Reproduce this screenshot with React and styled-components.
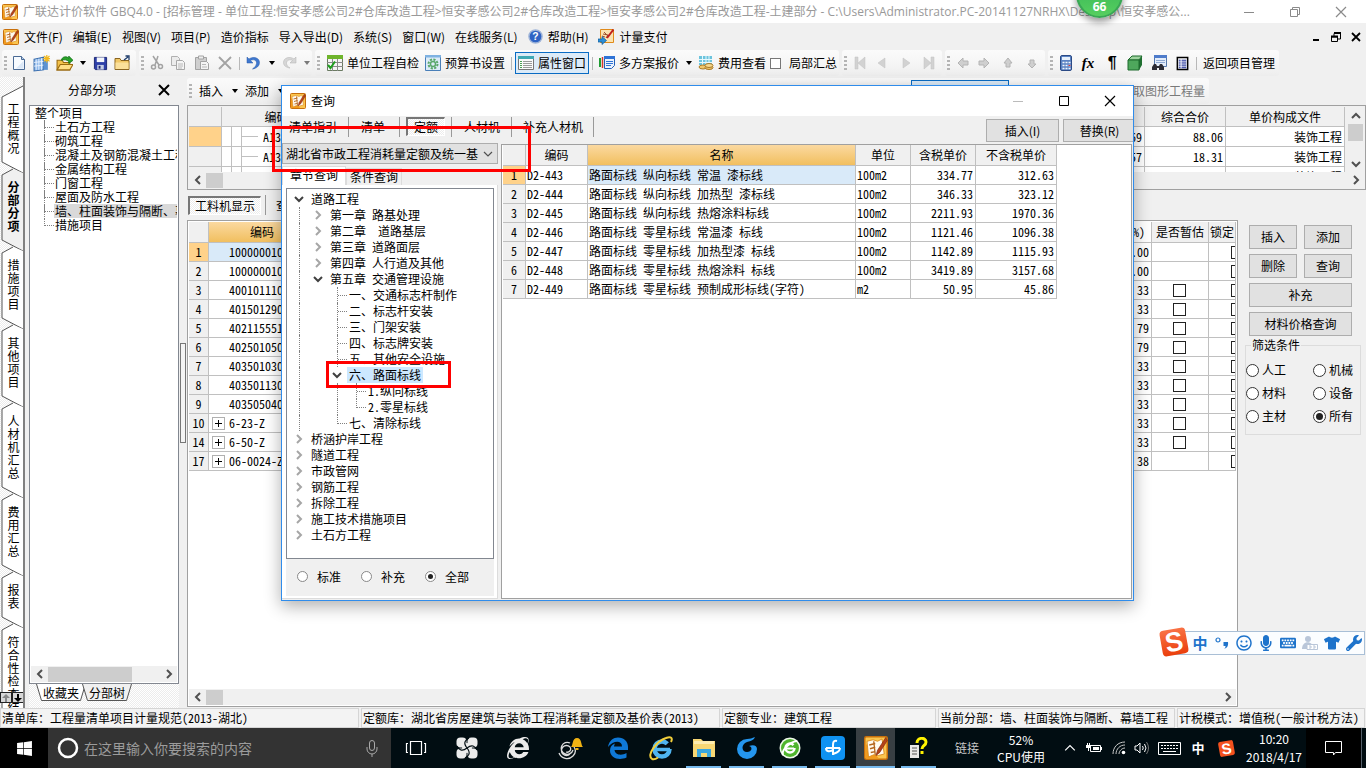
import React, { useState } from "react";
import styled, { createGlobalStyle, css } from "styled-components";
import {
  FaInternetExplorer,
  FaKeyboard,
  FaMicrophone,
  FaRegSmile,
  FaTshirt,
  FaWindows,
  FaWrench,
} from "react-icons/fa";

const uiFont = '"Noto Sans CJK SC", sans-serif';
const gridFont = '"Noto Sans Mono CJK SC", "Noto Sans CJK SC", sans-serif';

const hatch = css`
  background: repeating-conic-gradient(#ffffff 0 25%, #ececec 0 50%) 0 0 / 2px 2px;
`;

const GlobalStyle = createGlobalStyle`
  *, *::before, *::after { box-sizing: border-box; }
  body {
    margin: 0;
    background: #f0f0f0;
    color: #000;
    font: 12px/16px ${uiFont};
  }
  button, input, select { font: inherit; color: inherit; margin: 0; padding: 0; }
  button { background: none; border: 0; white-space: nowrap; }
  svg { display: block; flex: none; }
`;

/* ---------- icons ---------- */

const AppIcon = ({ size = 16 }) => (
  <svg width={size} height={size} viewBox="0 0 16 16">
    <rect x="0.5" y="0.5" width="15" height="15" rx="1" fill="#fbc54e" stroke="#c8700c" />
    <path d="M1 15V5l9 10z" fill="#f39a1c" />
    <path d="M2 3.500l4-1 3 1 3-1.500 1.500 10-4 1-3-.5L3 14z" fill="#fffaf0" stroke="#d98b20" strokeWidth="0.600" />
    <path d="M3.500 6l4-1M4 8.500l3.500-1M4.500 11l3-.6M6.500 3.500l1 9" stroke="#b5651d" strokeWidth="0.900" />
    <path d="M14.500 1L9 9.500 8 13l2.500-2L15.500 3z" fill="#b4431a" stroke="#7c2408" strokeWidth="0.400" />
  </svg>
);

const shapes = {
  newFile: (
    <>
      <path d="M2.500 1.500h8l3 3v10h-11z" fill="#f7fbff" stroke="#4a6a94" />
      <path d="M10.500 1.500v3h3" fill="#b9d0ec" stroke="#4a6a94" />
      <path d="M12.500 6v7.500H5z" fill="#dbe8f7" />
    </>
  ),
  newBook: (
    <>
      <path d="M1 4l9-2v12l-9 1z" fill="#8db8ea" stroke="#3c6fae" />
      <path d="M3 4v10M5.500 3.500V14M8 3v11M1 7l9-1M1 10.500l9-1" stroke="#eef6ff" strokeWidth="0.8" />
      <path d="M10 5h4v9h-4z" fill="#5d93d2" />
      <path d="M13 0v7M9.500 3.500h7M10.500 1l5 5M15.500 1l-5 5" stroke="#f2b91e" strokeWidth="1.200" />
    </>
  ),
  open: (
    <>
      <path d="M1 5h5l1 2h6v7H1z" fill="#f3c14a" stroke="#9a6b10" />
      <path d="M1 14l3-5h12l-3 5z" fill="#ffdf86" stroke="#9a6b10" />
      <path d="M5 5c1-4 5-4 7-2V1l4 4-4 3V6C10 4.500 8 4 5 5z" fill="#2aa52a" stroke="#0b6b12" strokeWidth="0.7" />
    </>
  ),
  save: (
    <>
      <path d="M1.500 1.500h13v13h-12l-1-1z" fill="#2d3fa8" stroke="#1a2470" />
      <path d="M4 1.500h8v5H4z" fill="#f4f6fb" />
      <path d="M4.500 9.500h7v5h-7z" fill="#c4cde4" />
      <path d="M6 10.500h2v3H6z" fill="#1a2470" />
    </>
  ),
  folder: (
    <>
      <path d="M1 3.500h5l1 2h8v9H1z" fill="#f1c766" stroke="#8a6521" />
      <path d="M1.500 7.500h13v6.500h-13z" fill="#fbe09a" />
      <path d="M10 5l4-3M11.500 1h3.500v4" stroke="#1f3d6b" strokeWidth="1.300" fill="none" />
    </>
  ),
  cut: (
    <>
      <path d="M4 1l6 9M9 1L6 10" stroke="#a3a3a3" strokeWidth="1.500" fill="none" />
      <circle cx="4.500" cy="12" r="2" fill="none" stroke="#a3a3a3" strokeWidth="1.500" />
      <circle cx="11.500" cy="11.500" r="2" fill="none" stroke="#a3a3a3" strokeWidth="1.500" />
    </>
  ),
  copy: (
    <>
      <path d="M1.500 1.500h6l2 2v7h-8z" fill="#ececec" stroke="#b0b0b0" />
      <path d="M6.500 5.500h6l2 2v7h-8z" fill="#f4f4f4" stroke="#a8a8a8" />
      <path d="M8 9h5M8 11h5M8 13h4" stroke="#b8b8b8" />
    </>
  ),
  paste: (
    <>
      <path d="M1.500 2.500h11v12h-11z" fill="#cfcfcf" stroke="#a3a3a3" />
      <path d="M4.500 1h5v3h-5z" fill="#eee" stroke="#a3a3a3" />
      <path d="M6.500 6.500h6l2 2v6h-8z" fill="#f4f4f4" stroke="#a3a3a3" />
      <path d="M8 9.500h4M8 12h5" stroke="#b8b8b8" />
    </>
  ),
  remove: <path d="M2 2l12 12M14 2L2 14" stroke="#a3a3a3" strokeWidth="1.800" />,
  undo: (
    <path d="M2 2v6h6L5.500 5.500C8 4 12 5 11.500 8.500 11 11 9.500 12.500 7.500 14c4-.5 7-3 7-6.500C14.500 2.500 8 1 4 4z" fill="#3f78cf" stroke="#2b5aa8" strokeWidth="0.500" />
  ),
  redo: (
    <path d="M14 2v6H8l2.500-2.500C8 4 4.500 5 4.500 8.500c.3 2 1.500 3.500 3.500 4.500-4-.5-6.500-2.500-6.500-5.500C1.500 2.500 8 1 12 4z" fill="#d6d6d6" stroke="#b0b0b0" strokeWidth="0.500" />
  ),
  check: (
    <>
      <path d="M.5.500h15v15H.5z" fill="#f5f5f5" stroke="#6b7b62" />
      <path d="M0 0h16v4H0z" fill="#6fb52c" />
      <path d="M0 7.500h16M0 11.500h16M5.500 4v12M10.500 4v12" stroke="#8a8a8a" />
      <path d="M1 10l2.500 3L8 6.500" stroke="#1e9e1e" strokeWidth="2" fill="none" />
    </>
  ),
  gear: (
    <>
      <path d="M.5.500h15v15H.5z" fill="#dcebf8" stroke="#4a7fb8" />
      <path d="M0 0h16v2.500H0z" fill="#7fb2e2" />
      <circle cx="8" cy="9" r="4.500" fill="none" stroke="#59a869" strokeWidth="2" strokeDasharray="2.200 1.300" />
      <circle cx="8" cy="9" r="2.500" fill="none" stroke="#59a869" strokeWidth="1.400" />
    </>
  ),
  list: (
    <>
      <path d="M.5 1.500h15v13H.5z" fill="#fafafa" stroke="#777" />
      <path d="M0 1h16v3H0z" fill="#3fa9b5" />
      <path d="M2 6.500h2M2 8.500h2M2 10.500h2M2 12.500h2" stroke="#49a04f" />
      <path d="M5 6.500h9M5 8.500h9M5 10.500h9M5 12.500h9" stroke="#9b9b9b" />
    </>
  ),
  plans: (
    <>
      <path d="M1 3v9" stroke="#1f9d33" strokeWidth="2" />
      <path d="M3.500 2v11" stroke="#d23a2e" strokeWidth="1.500" />
      <path d="M5.500 1.500h10v9l-3 3h-7z" fill="#eaf2fd" stroke="#2360b8" />
      <path d="M5 1h11v3H5z" fill="#2f73d6" />
      <path d="M7 6.500h7M7 8.500h7M7 10.500h5" stroke="#2f73d6" />
    </>
  ),
  fees: (
    <>
      <path d="M1 1h13v9H1z" fill="#6cc4dd" />
      <path d="M1 4.500h13M1 7.500h13M4.500 1v9M8 1v9M11 1v9" stroke="#e6f8fd" />
      <ellipse cx="5" cy="12" rx="4" ry="2" fill="#f1c76b" stroke="#a87a28" />
      <ellipse cx="11" cy="12.500" rx="4" ry="2" fill="#f1c76b" stroke="#a87a28" />
      <ellipse cx="11" cy="10.500" rx="4" ry="2" fill="#f7d88d" stroke="#a87a28" />
    </>
  ),
  first: <path d="M3 2h3v12H3zM13 2v12L6 8z" fill="#d2d2d2" stroke="#c0c0c0" strokeWidth="0.500" />,
  prev: <path d="M11 3v10L4 8z" fill="#d2d2d2" stroke="#c0c0c0" strokeWidth="0.500" />,
  next: <path d="M5 3v10l7-5z" fill="#d2d2d2" stroke="#c0c0c0" strokeWidth="0.500" />,
  last: <path d="M10 2h3v12h-3zM3 2v12l7-6z" fill="#d2d2d2" stroke="#c0c0c0" strokeWidth="0.500" />,
  left: <path d="M3 8l5-5v3h5v4H8v3z" fill="#cfcfcf" stroke="#b4b4b4" />,
  right: <path d="M13 8L8 3v3H3v4h5v3z" fill="#cfcfcf" stroke="#b4b4b4" />,
  up: <path d="M8 3l4 5h-2v4H6V8H4z" fill="#cfcfcf" stroke="#b4b4b4" />,
  down: <path d="M8 13l4-4h-2V5H6v4H4z" fill="#cfcfcf" stroke="#b4b4b4" />,
  calc: (
    <>
      <rect x="2.500" y="0.500" width="11" height="15" rx="1.500" fill="#5b83c4" stroke="#2b4a85" />
      <path d="M4 2h8v3H4z" fill="#e6f0fb" />
      <path d="M4.500 7.500h8M4.500 10.500h8M4.500 13.500h8" stroke="#f2f6fc" strokeWidth="1.600" strokeDasharray="2 1" />
      <path d="M10.500 10h2v1h-2z" fill="#d33" />
    </>
  ),
  cube: (
    <>
      <path d="M1 5l4-4h10l-3 4z" fill="#9fd39f" stroke="#1d6b2c" />
      <path d="M12 5l3-4v9l-3 5z" fill="#1f6f30" />
      <path d="M1 5h11v10H1z" fill="#4ea75c" stroke="#1d6b2c" />
    </>
  ),
  findDoc: (
    <>
      <path d="M3.500.500h12v11h-12z" fill="#e4edfa" stroke="#5577aa" />
      <path d="M3 0h13v3H3z" fill="#4f7ccb" />
      <path d="M5 5.500h9M5 7.500h9" stroke="#8fa9d2" />
      <path d="M1 15v-3l2-3h2l1 2h2l1-2h2l2 3v3H8v-2H6v2z" fill="#2c2c34" />
    </>
  ),
  sheet: (
    <>
      <path d="M2.500 1.500h11v13h-11z" fill="#fff" stroke="#000" strokeWidth="1.600" />
      <path d="M4 4.500h2M4 6.500h2M4 8.500h2M4 10.500h2M4 12.500h2M7 4.500h5M7 6.500h5M7 8.500h5M7 10.500h5M7 12.500h5" stroke="#0a1c8c" />
    </>
  ),
  help: (
    <>
      <circle cx="8" cy="8" r="7" fill="#2e63c4" stroke="#9fb4d8" strokeWidth="1.500" />
      <text x="8" y="12" textAnchor="middle" fontSize="11" fontWeight="700" fill="#fff" fontFamily="Liberation Sans">?</text>
    </>
  ),
  pay: (
    <>
      <path d="M2.500.500h13v13h-13z" fill="#fbe3b0" stroke="#e08a1a" />
      <path d="M5 5l5 1-2 3M6 3l4 4M4 7l3 1" stroke="#a0522d" fill="none" />
      <path d="M15.500.500L9 9" stroke="#c0201c" strokeWidth="2" />
      <path d="M0 10h4V7.500L8.500 11.500 4 15.500V13H0z" fill="#2c8ed6" stroke="#125b9a" strokeWidth="0.700" />
    </>
  ),
};

const Icon = ({ name, size = 16 }) => (
  <svg width={size} height={size} viewBox="0 0 16 16">{shapes[name]}</svg>
);

const Caret = () => (
  <svg width="7" height="4" viewBox="0 0 7 4"><path d="M1 0h6L4 4z" fill="currentColor" /></svg>
);

const chevrons = {
  left: "M7 1L3 5l4 4",
  right: "M3 1l4 4-4 4",
  up: "M1 7l4-4 4 4",
  down: "M1 3l4 4 4-4",
};

const Chevron = ({ dir, color = "#505050", weight = 2, size = 10 }) => (
  <svg width={size} height={size} viewBox="0 0 10 10">
    <path d={chevrons[dir]} fill="none" stroke={color} strokeWidth={weight} />
  </svg>
);

/* ---------- window frame ---------- */

const Desktop = styled.div`
  position: relative;
  display: flex;
  flex-direction: column;
  height: 100vh;
  min-height: 640px;
  overflow: hidden;
`;

const TitleBar = styled.header`
  display: flex;
  align-items: center;
  height: 23px;
  padding: 0 17px 0 2px;
  gap: 5px;
  background: #fff;
  color: #999;
`;

const Title = styled.h1`
  flex: 1;
  margin: 0;
  font: 12px/22px "Open Sans", ${uiFont};
  white-space: nowrap;
  overflow: hidden;
`;

const WindowButtons = styled.div`
  display: flex;
  align-items: center;
  gap: ${p => p.$gap}px;
  color: ${p => p.$color};
`;

const WindowButton = styled.button`
  display: grid;
  place-items: center;
  width: 16px;
  height: 16px;
`;

const MenuBar = styled.nav`
  display: flex;
  align-items: center;
  height: 27px;
  padding: 0 2px 0 3px;
  gap: 10px;
`;

const MenuItem = styled.button`
  display: flex;
  align-items: center;
  gap: 5px;
  line-height: 24px;
`;

const Spacer = styled.span`
  flex: 1;
`;

const ToolRow = styled.div`
  display: flex;
  height: 27px;
  padding-left: 2px;
  gap: 3px;
`;

const ToolGroup = styled.div`
  display: flex;
  align-items: center;
  height: 26px;
  padding: 0 1px 0 2px;
  border-radius: 3px;
  background: linear-gradient(#fbfbfb, #f4f4f4 60%, #ededed);
  flex: ${p => (p.$grow ? "1" : "none")};
`;

const Grip = styled.span`
  width: 3px;
  height: 15px;
  margin-right: 4px;
  background: repeating-linear-gradient(#b4b4b4 0 2px, transparent 2px 4px);
`;

const ToolButton = styled.button`
  display: flex;
  align-items: center;
  justify-content: center;
  gap: 4px;
  height: 22px;
  flex: none;
  width: ${p => (p.$w ? `${p.$w}px` : "auto")};
  padding: 0 ${p => (p.$w ? 0 : 2)}px;
  border: 1px solid ${p => (p.$active ? "#0a6cc4" : "transparent")};
  background: ${p => (p.$active ? "#dcebf8" : "none")};
  color: ${p => (p.$muted ? "#7a7a7a" : "#000")};
`;

const ToolSep = styled.span`
  width: 1px;
  height: 13px;
  margin: 0 3px;
  background: #b8b8b8;
`;

const ToolCheck = styled.label`
  display: flex;
  align-items: center;
  gap: 8px;
  margin-right: 1px;
`;

const Square = styled.input`
  appearance: none;
  display: block;
  flex: none;
  width: ${p => p.$size || 13}px;
  height: ${p => p.$size || 13}px;
  border: 1px solid ${p => p.$line || "#222"};
  background: #fff;
`;

const FxText = styled.em`
  font: italic 700 15px/16px "Liberation Serif", serif;
`;

const ParaText = styled.b`
  font: 700 16px/16px "Liberation Sans", sans-serif;
`;

/* ---------- workspace ---------- */

const Workspace = styled.main`
  display: flex;
  flex: 1;
  min-height: 0;
`;

const SideTabs = styled.nav`
  position: relative;
  display: flex;
  flex-direction: column;
  width: 25px;
  padding-top: 14px;
  overflow: hidden;
  border-right: 2px solid #808080;
  ${hatch}
`;

const SideTab = styled.button`
  position: relative;
  display: flex;
  align-items: flex-start;
  justify-content: center;
  flex: none;
  width: 23px;
  height: ${p => p.$h}px;
  padding: 11px 0 0 4px;
  font-weight: ${p => (p.$active ? 700 : 400)};

  svg {
    position: absolute;
    inset: 0;
    overflow: visible;
  }
  span {
    position: relative;
    line-height: 13px;
    white-space: pre-line;
    text-align: center;
  }
`;

const SideArrows = styled.div`
  position: absolute;
  left: 0;
  bottom: 5px;
  display: flex;

  button {
    display: grid;
    place-items: center;
    width: 12px;
    height: 11px;
    border: 1px solid #222;
    background: #d8d8d8;
  }
`;

const TreePanel = styled.aside`
  display: flex;
  flex-direction: column;
  width: 150px;
  margin: 0 1px 0 4px;
`;

const PanelHead = styled.div`
  display: flex;
  align-items: center;
  height: 28px;
  padding: 0 7px 2px 39px;
`;

const TreeBox = styled.div`
  display: flex;
  flex-direction: column;
  flex: 1;
  min-height: 0;
  padding: 0 1px 1px;
  border: 1px solid #828790;
  background: #fff;
`;

const TreeScroll = styled.div`
  flex: 1;
  overflow: hidden;
`;

const PartTree = styled.ul`
  margin: 0;
  padding: 0 0 0 4px;
  list-style: none;
  font-family: ${gridFont};

  ul {
    margin: 0 0 0 9px;
    padding: 0;
    list-style: none;
  }
`;

const PartRow = styled.li`
  display: flex;
  height: 14px;
  line-height: 14px;
  white-space: nowrap;

  &::before {
    content: "";
    flex: none;
    width: 10px;
    height: 8px;
    border-left: 1px dotted #808080;
    border-bottom: 1px dotted #808080;
  }
  &:not(:last-child) {
    background: repeating-linear-gradient(#808080 0 1px, transparent 1px 2px) 0 0 / 1px 14px no-repeat;
  }

  span {
    padding-left: 1px;
    background: ${p => (p.$selected ? "#d9d9d9" : "none")};
  }
`;

const PartRoot = styled.div`
  line-height: 14px;
`;

const BottomTabs = styled.div`
  display: flex;
  height: 24px;
  padding-left: 7px;
  ${hatch}
`;

const BottomTab = styled.button`
  position: relative;
  width: 50px;
  height: 17px;
  margin-right: -4px;
  line-height: 16px;
  font-family: ${gridFont};

  svg {
    position: absolute;
    inset: 0;
  }
  span {
    position: relative;
  }
`;

const Splitter = styled.div`
  display: flex;
  align-items: center;
  width: 7px;

  span {
    width: 6px;
    height: 100px;
    border: 1px solid #777;
    background: #f4f4f4;
  }
`;

const Content = styled.section`
  display: flex;
  flex-direction: column;
  flex: 1;
  min-width: 0;
`;

const SubTools = styled.div`
  display: flex;
  height: 28px;
  padding: 1px 157px 0 0;
`;

const HiddenTool = styled.span`
  flex: none;
  width: 98px;
  height: 22px;
  margin: 0 121px 0 auto;
  border: 1px solid #0a6cc4;
  background: #dcebf8;
`;

const Frame = styled.div`
  display: flex;
  flex-direction: column;
  flex: ${p => (p.$grow ? "1" : "none")};
  min-width: 0;
  height: ${p => (p.$h ? `${p.$h}px` : "auto")};
  padding: 1px;
  border: 1px solid #a0a0a0;
  background: ${p => p.$bg || "#fff"};
`;

const Clip = styled.div`
  flex: 1;
  min-width: 0;
  margin-right: ${p => p.$mr || 0}px;
  overflow: hidden;
  background: #fff;
`;

const FrameRow = styled.div`
  display: flex;
  flex: 1;
  min-height: 0;
`;

const Grid = styled.table`
  width: ${p => (p.$w ? `${p.$w}px` : "100%")};
  table-layout: fixed;
  border-collapse: separate;
  border-spacing: 0;
  font-family: ${gridFont};

  th,
  td {
    height: ${p => p.$row || 19}px;
    padding: 0 2px 0 1px;
    overflow: hidden;
    white-space: nowrap;
    line-height: 16px;
    border: solid #c0c0c0;
    border-width: 0 1px 1px 0;
    font-weight: 400;
    text-align: left;
  }
  thead th {
    height: ${p => p.$head || 21}px;
    padding: 0;
    text-align: center;
    background: #f0f0f0;
  }
  tbody th {
    padding: 0;
    text-align: center;
    background: #f0f0f0;
  }
`;

const HotTh = styled.th`
  && {
    background: linear-gradient(#fbd9a0, #f1bf5f);
  }
`;

const RowTh = styled.th`
  && {
    background: ${p => (p.$on ? "#ffd28a" : "#f0f0f0")};
  }
`;

const Cell = styled.td`
  && {
    text-align: ${p => p.$align || "left"};
    background: ${p => (p.$on ? "#d9eaf9" : "none")};
    padding-left: ${p => p.$pad || 1}px;
  }
  > input {
    margin: ${p => (p.$align === "center" ? "0 auto" : "0")};
  }
`;

const CodeCell = styled.div`
  display: flex;
  align-items: center;
  gap: 4px;
  padding-left: ${p => (p.$box ? 2 : 19)}px;
`;

const PlusBox = styled.button`
  display: grid;
  place-items: center;
  width: 13px;
  height: 13px;
  border: 1px solid #b0b0b0;
  background: #fff;
`;

const Branch = styled.div`
  display: flex;
  align-items: center;
  height: 19px;
  margin-left: -1px;

  i {
    width: 10px;
    height: 19px;
    border-right: 1px solid #c0c0c0;
  }
  b {
    width: 16px;
    height: 1px;
    margin-right: 5px;
    background: #c0c0c0;
  }
`;

const ScrollTrack = styled.div`
  display: flex;
  flex: none;
  flex-direction: ${p => (p.$vertical ? "column" : "row")};
  align-items: center;
  justify-content: space-between;
  ${p => (p.$vertical ? "width: 17px;" : "height: 16px;")}
  background: #f0f0f0;

  button {
    display: grid;
    place-items: center;
    width: 17px;
    height: 17px;
  }
  span {
    flex: none;
    background: #cdcdcd;
    ${p => (p.$vertical ? `width: 15px; height: ${p.$thumb}px;` : `height: 15px; width: ${p.$thumb}px;`)}
    ${p => (p.$vertical ? "margin-bottom: auto;" : "margin-right: auto;")}
  }
`;

const InfoTabs = styled.div`
  display: flex;
  align-items: center;
  height: 30px;
  padding-left: 1px;
  font-family: ${gridFont};
`;

const PressTab = styled.button`
  height: 19px;
  padding: 0 ${p => p.$pad || 11}px;
  line-height: 16px;
  font-family: ${gridFont};
  ${p =>
    p.$active &&
    css`
      border: 1px solid #fff;
      border-top: 2px solid #777;
      border-left: 2px solid #777;
      ${hatch}
    `}
`;

const TabSep = styled.span`
  width: 1px;
  height: 20px;
  margin: 0 ${p => p.$m || 5}px;
  background: #999;
`;

const LowerRow = styled.div`
  display: flex;
  flex: 1;
  min-height: 0;
  padding-bottom: 1px;
`;

const SideActions = styled.aside`
  width: 128px;
  padding: 5px 5px 0 7px;
  font-family: ${gridFont};
`;

const ActionGrid = styled.div`
  display: grid;
  grid-template-columns: 48px 48px;
  gap: 5px 7px;
  margin-left: 4px;
`;

const Button = styled.button`
  height: 24px;
  line-height: 20px;
  border: 1px solid #adadad;
  background: #e1e1e1;
  grid-column: ${p => (p.$wide ? "1 / -1" : "auto")};
`;

const FilterSet = styled.fieldset`
  display: grid;
  grid-template-columns: 67px 1fr;
  align-content: start;
  row-gap: 7px;
  height: 98px;
  margin: 1px 0 0;
  padding: 9px 0 0;
  border: 1px solid #dcdcdc;

  legend {
    margin-left: 5px;
    padding: 0 1px;
  }
`;

const RadioLabel = styled.label`
  display: flex;
  align-items: center;
  gap: ${p => p.$gap}px;
  height: 16px;
`;

const Radio = styled.input`
  appearance: none;
  display: grid;
  place-items: center;
  width: ${p => p.$size}px;
  height: ${p => p.$size}px;
  border: 1px solid ${p => p.$line};
  border-radius: 50%;
  background: #fff;

  &:checked::before {
    content: "";
    width: ${p => p.$size - 6}px;
    height: ${p => p.$size - 6}px;
    border-radius: 50%;
    background: #222;
  }
`;

/* ---------- query dialog ---------- */

const Dialog = styled.section`
  position: absolute;
  left: 281px;
  top: 85px;
  display: flex;
  flex-direction: column;
  width: 853px;
  height: 516px;
  border: 1px solid #2f8ceb;
  background: #f0f0f0;
  box-shadow: 0 5px 16px rgba(0, 0, 0, 0.32);
`;

const DialogTitle = styled.div`
  display: flex;
  align-items: center;
  gap: 5px;
  height: 30px;
  padding: 0 15px 0 8px;
  background: #fff;
`;

const DialogTools = styled.div`
  display: flex;
  flex: none;
  height: 27px;
  overflow: hidden;
`;

const DialogTabs = styled.div`
  display: flex;
  align-items: center;
  height: 21px;
`;

const DialogButtons = styled.div`
  display: flex;
  gap: 4px;
  margin: 3px -3px 0 auto;

  button {
    width: 73px;
    height: 23px;
  }
`;

const DialogBody = styled.div`
  display: flex;
  flex: 1;
  min-height: 0;
`;

const QueryPane = styled.div`
  display: flex;
  flex-direction: column;
  width: 216px;
  margin-right: 3px;
  font-family: ${gridFont};
`;

const Combo = styled.div`
  display: grid;
  grid-template-columns: 1fr 14px;
  align-items: center;
  height: 21px;
  border: 1px solid #adadad;
  background: #e1e1e1;

  select {
    grid-area: 1 / 1 / 2 / 3;
    appearance: none;
    width: 100%;
    height: 19px;
    padding-left: 3px;
    border: 0;
    background: none;
    font-family: ${gridFont};
  }
  svg {
    grid-area: 1 / 2;
    pointer-events: none;
  }
`;

const PageTabs = styled.div`
  display: flex;
  align-items: flex-end;
  height: 21px;
`;

const PageTab = styled.button`
  height: ${p => (p.$active ? 19 : 17)}px;
  padding: ${p => (p.$active ? "0 7px 4px" : "0 3px")};
  line-height: 16px;
  font-family: ${gridFont};
  border: 1px solid #dcdcdc;
  border-bottom: 0;
  background: ${p => (p.$active ? "#fff" : "#f0f0f0")};
`;

const Page = styled.div`
  display: flex;
  flex-direction: column;
  flex: 1;
  min-height: 0;
  margin-bottom: 1px;
  padding: 3px 3px 2px 4px;
  border: solid #dcdcdc;
  border-width: 0 1px 1px 0;
  background: #fff;
`;

const QuotaTree = styled.ul`
  flex: 1;
  margin: 0;
  padding: 2px 0 0 3px;
  overflow: hidden;
  list-style: none;
  border: 1px solid #828790;
  background: #fff;
`;

const QuotaRow = styled.li`
  display: flex;
  height: 16px;
  line-height: 16px;
  white-space: pre;

  > span:last-child {
    padding: 0 2px;
    background: ${p => (p.$selected ? "#cce8ff" : "none")};
  }
`;

const Guide = styled.span`
  display: flex;
  align-items: center;
  flex: none;
  width: 19px;
  height: 16px;
  padding-left: ${p => (p.$kind === "node" ? 4 : 9)}px;

  &::before {
    content: "";
    display: ${p => (p.$kind === "line" || p.$kind === "tee" || p.$kind === "elbow" ? "block" : "none")};
    align-self: flex-start;
    width: 10px;
    height: ${p => (p.$kind === "elbow" ? 9 : 16)}px;
    border-left: 1px dotted #808080;
    border-bottom: ${p => (p.$kind === "elbow" ? "1px dotted #808080" : "0")};
    background: ${p => (p.$kind === "tee" ? "repeating-linear-gradient(90deg, #808080 0 1px, transparent 1px 2px) 0 8px / 10px 1px no-repeat" : "none")};
  }
`;

const ScopeBar = styled.div`
  display: flex;
  align-items: center;
  gap: 20px;
  height: 37px;
  padding: 0 0 2px 11px;
  background: #f0f0f0;
`;

const ResultPane = styled.div`
  flex: 1;
  min-width: 0;
  margin: 1px 1px 1px 0;
  padding: 0 1px;
  border: 1px solid #a0a0a0;
  background: #fff;
`;

/* ---------- overlays ---------- */

const RedMark = styled.div`
  position: absolute;
  left: ${p => p.$x}px;
  top: ${p => p.$y}px;
  width: ${p => p.$w}px;
  height: ${p => p.$h}px;
  border: 3px solid #ff0000;
  pointer-events: none;
`;

const SpeedBall = styled.div`
  position: absolute;
  top: -29px;
  right: 243px;
  display: flex;
  align-items: flex-end;
  justify-content: center;
  width: 47px;
  height: 47px;
  padding-bottom: 1px;
  border: 2px solid #3aa655;
  border-radius: 50%;
  background: linear-gradient(#2fae55, #56cf5f);
  box-shadow: 0 4px 7px rgba(0, 0, 0, 0.4);
  color: #fff;
  font: 700 12px/16px "Open Sans", sans-serif;
`;

const ImeBar = styled.div`
  position: absolute;
  right: 1px;
  bottom: 113px;
  display: flex;
  align-items: center;
  gap: 6px;
  height: 24px;
  padding: 0 2px 0 19px;
  border: 1px solid #a9bfd6;
  background: #fbfdff;
  color: #1e73cb;

  > span,
  > svg {
    width: 16px;
    height: 16px;
  }
`;

const ImeLogo = styled.b`
  position: absolute;
  left: -12px;
  top: -3px;
  display: grid;
  place-items: center;
  width: 26px;
  height: 26px;
  border-radius: 4px;
  background: linear-gradient(#f97245, #ea3f0c);
  color: #fff;
  font: 700 27px/26px "Liberation Sans", sans-serif;
  transform: rotate(-10deg);
`;

const ImeText = styled.span`
  font: 700 ${p => p.$size || 15}px/16px ${uiFont};
  text-align: center;
`;

/* ---------- status bar and taskbar ---------- */

const StatusBar = styled.footer`
  display: grid;
  grid-template-columns: 359fr 359fr 214fr 237fr 188fr;
  gap: 2px;
  flex: none;
  height: 20px;
  padding: 0 1px 0 0;
  font-family: ${gridFont};

  span {
    padding-left: 1px;
    border: 1px solid #d5d5d5;
    line-height: 18px;
    white-space: nowrap;
    overflow: hidden;
    background: #f3f3f3;
  }
`;

const Taskbar = styled.footer`
  display: flex;
  flex: none;
  height: 40px;
  background: #010d12;
  color: #fff;
`;

const StartButton = styled.button`
  display: grid;
  place-items: center;
  width: 48px;
  background: #000;
`;

const SearchBox = styled.label`
  display: flex;
  align-items: center;
  width: 343px;
  padding: 0 12px 0 9px;
  gap: 5px;
  background: #333;

  input {
    flex: 1;
    min-width: 0;
    border: 0;
    outline: 0;
    background: none;
    font: 14px/20px ${uiFont};
  }
  input::placeholder {
    color: #9b9b9b;
    opacity: 1;
  }
`;

const TaskButton = styled.button`
  display: grid;
  place-items: center;
  width: ${p => p.$w}px;
  padding: 0 0 1px;
  background: ${p => (p.$active ? "#383f43" : "none")};
  box-shadow: ${p => (p.$running ? "inset 0 -2px #76b9ed" : "none")};
  ${p => (p.$running ? "width: 35px; margin: 0 4px;" : "")}
  ${p => (p.$active ? "width: 39px; margin: 0 2px;" : "")}
`;

const Tray = styled.div`
  display: flex;
  align-items: center;
  margin-left: auto;
`;

const TrayItem = styled.button`
  display: grid;
  place-items: center;
  width: ${p => p.$w}px;
  line-height: ${p => p.$line || 16}px;
  text-align: center;
  color: ${p => p.$color || "#fff"};
`;

const TrayLogo = styled.b`
  display: grid;
  place-items: center;
  width: 15px;
  height: 15px;
  border-radius: 2px;
  background: #f4511e;
  font: 700 15px/15px "Liberation Sans", sans-serif;
  transform: rotate(-10deg);
`;

const Notice = styled.button`
  display: grid;
  place-items: center;
  width: 56px;
  height: 40px;
  margin-right: 4px;
  border-right: 1px solid #55606a;
  background: #000;
`;

/* ---------- data ---------- */

const menus = ["编辑(E)", "视图(V)", "项目(P)", "造价指标", "导入导出(D)", "系统(S)", "窗口(W)", "在线服务(L)"];

const sideTabs = ["工程概况", "分部分项", "措施项目", "其他项目", "人材机汇总", "费用汇总", "报表", "符合性检查结"];

const parts = ["土石方工程", "砌筑工程", "混凝土及钢筋混凝土工程", "金属结构工程", "门窗工程", "屋面及防水工程", "墙、柱面装饰与隔断、幕墙工程", "措施项目"];

const resources = [
  ["1", "100000010", ".00"],
  ["2", "100000010", ".00"],
  ["3", "400101110", "33", true],
  ["4", "401501290", "33", true],
  ["5", "402115551", "79", true],
  ["6", "402501050", "79", true],
  ["7", "403501030", "33", true],
  ["8", "403501130", "33", true],
  ["9", "403505040", "33", true],
  ["10", "6-23-Z", "33", true],
  ["14", "6-50-Z", "33", true],
  ["17", "06-0024-Z", "38"],
];

const quotas = [
  ["D2-443", "路面标线 纵向标线 常温 漆标线", "100m2", "334.77", "312.63"],
  ["D2-444", "路面标线 纵向标线 加热型 漆标线", "100m2", "346.33", "323.12"],
  ["D2-445", "路面标线 纵向标线 热熔涂料标线", "100m2", "2211.93", "1970.36"],
  ["D2-446", "路面标线 零星标线 常温漆 标线", "100m2", "1121.46", "1096.38"],
  ["D2-447", "路面标线 零星标线 加热型漆 标线", "100m2", "1142.89", "1115.93"],
  ["D2-448", "路面标线 零星标线 热熔涂料 标线", "100m2", "3419.89", "3157.68"],
  ["D2-449", "路面标线 零星标线 预制成形标线(字符)", "m2", "50.95", "45.86"],
];

// guide cells before each label: o open, c closed, l line, t tee, e elbow, _ blank
const quotaTree = [
  ["o", "道路工程"],
  ["lc", "第一章 路基处理"],
  ["lc", "第二章  道路基层"],
  ["lc", "第三章 道路面层"],
  ["lc", "第四章 人行道及其他"],
  ["lo", "第五章 交通管理设施"],
  ["l_t", "一、交通标志杆制作"],
  ["l_t", "二、标志杆安装"],
  ["l_t", "三、门架安装"],
  ["l_t", "四、标志牌安装"],
  ["l_t", "五、其他安全设施"],
  ["l_o", "六、路面标线"],
  ["l_lt", "1.纵向标线"],
  ["l_le", "2.零星标线"],
  ["l_e", "七、清除标线"],
  ["c", "桥涵护岸工程"],
  ["c", "隧道工程"],
  ["c", "市政管网"],
  ["c", "钢筋工程"],
  ["c", "拆除工程"],
  ["c", "施工技术措施项目"],
  ["c", "土石方工程"],
];

const guideKinds = { l: "line", t: "tee", e: "elbow", o: "node", c: "node", _: "blank" };

/* ---------- pieces ---------- */

const HScroll = ({ thumb }) => (
  <ScrollTrack $thumb={thumb}>
    <button aria-label="向左"><Chevron dir="left" /></button>
    <span />
    <button aria-label="向右"><Chevron dir="right" /></button>
  </ScrollTrack>
);

const WinControls = ({ gap, color, dim }) => (
  <WindowButtons $gap={gap} $color={color}>
    <WindowButton aria-label="最小化">
      <svg width="12" height="12"><path d="M1 6.500h10" stroke={dim || "currentColor"} /></svg>
    </WindowButton>
    <WindowButton aria-label="最大化">
      {dim ? (
        <svg width="12" height="12"><path d="M1.500 1.500h9v9h-9z" fill="none" stroke="currentColor" /></svg>
      ) : (
        <svg width="12" height="12"><path d="M1.500 3.500h7v7h-7zM3.500 3.500v-2h7v7h-2" fill="none" stroke="currentColor" /></svg>
      )}
    </WindowButton>
    <WindowButton aria-label="关闭">
      <svg width="12" height="12"><path d="M1 1l10 10M11 1L1 11" stroke="currentColor" strokeWidth="1.200" /></svg>
    </WindowButton>
  </WindowButtons>
);

const MainTools = () => (
  <ToolRow>
    <ToolGroup>
      <Grip />
      <ToolButton $w={16} aria-label="新建"><Icon name="newFile" /></ToolButton>
      <ToolButton $w={28} aria-label="新建项目"><Icon name="newBook" size={17} /></ToolButton>
      <ToolButton $w={18} aria-label="打开"><Icon name="open" size={17} /></ToolButton>
      <ToolButton $w={18} aria-label="打开列表"><Caret /></ToolButton>
      <ToolButton $w={18} aria-label="保存"><Icon name="save" size={15} /></ToolButton>
      <ToolButton $w={26} aria-label="目录"><Icon name="folder" /></ToolButton>
    </ToolGroup>
    <ToolGroup>
      <Grip />
      <ToolButton $w={18} aria-label="剪切"><Icon name="cut" /></ToolButton>
      <ToolButton $w={24} aria-label="复制"><Icon name="copy" /></ToolButton>
      <ToolButton $w={24} aria-label="粘贴"><Icon name="paste" /></ToolButton>
      <ToolButton $w={22} aria-label="删除"><Icon name="remove" /></ToolButton>
      <ToolSep />
      <ToolButton $w={20} aria-label="撤销"><Icon name="undo" /></ToolButton>
      <ToolButton $w={16} aria-label="撤销列表"><Caret /></ToolButton>
      <ToolButton $w={22} aria-label="恢复"><Icon name="redo" /></ToolButton>
      <ToolButton $w={10} $muted aria-label="恢复列表"><Caret /></ToolButton>
    </ToolGroup>
    <ToolGroup>
      <Grip />
      <ToolButton><Icon name="check" />单位工程自检</ToolButton>
      <ToolButton><Icon name="gear" />预算书设置</ToolButton>
      <ToolSep />
      <ToolButton $active><Icon name="list" />属性窗口</ToolButton>
      <ToolSep />
      <ToolButton><Icon name="plans" />多方案报价</ToolButton>
      <ToolButton $w={12} aria-label="方案列表"><Caret /></ToolButton>
      <ToolButton $w={76}><Icon name="fees" />费用查看</ToolButton>
      <ToolCheck><Square type="checkbox" $size={11} $line="#777" />局部汇总</ToolCheck>
    </ToolGroup>
    <ToolGroup>
      <Grip />
      <ToolButton $w={18} aria-label="首条"><Icon name="first" /></ToolButton>
      <ToolButton $w={26} aria-label="上一条"><Icon name="prev" /></ToolButton>
      <ToolButton $w={22} aria-label="下一条"><Icon name="next" /></ToolButton>
      <ToolButton $w={24} aria-label="末条"><Icon name="last" /></ToolButton>
    </ToolGroup>
    <ToolGroup>
      <Grip />
      <ToolButton $w={18} aria-label="升级"><Icon name="left" /></ToolButton>
      <ToolButton $w={24} aria-label="降级"><Icon name="right" /></ToolButton>
      <ToolButton $w={24} aria-label="上移"><Icon name="up" /></ToolButton>
      <ToolButton $w={24} aria-label="下移"><Icon name="down" /></ToolButton>
    </ToolGroup>
    <ToolGroup>
      <Grip />
      <ToolButton $w={18} aria-label="计算器"><Icon name="calc" /></ToolButton>
      <ToolButton $w={26} aria-label="公式"><FxText>fx</FxText></ToolButton>
      <ToolButton $w={22} aria-label="段落"><ParaText>¶</ParaText></ToolButton>
      <ToolButton $w={24} aria-label="图元"><Icon name="cube" /></ToolButton>
      <ToolButton $w={24} aria-label="查找"><Icon name="findDoc" /></ToolButton>
      <ToolButton $w={22} aria-label="表格"><Icon name="sheet" size={15} /></ToolButton>
      <ToolSep />
      <ToolButton>返回项目管理</ToolButton>
    </ToolGroup>
  </ToolRow>
);

const VerticalTabs = ({ active, onSelect }) => (
  <SideTabs>
    {sideTabs.map((name, i) => {
      const h = name.length * 13 + 26;
      const top = i === 0 ? "M23 -5L2 6" : "M13 0L2 6";
      return (
        <SideTab key={name} $h={h} $active={active === i} onClick={() => onSelect(i)}>
          <svg width="23" height={h}>
            <path d={`M23 ${i === 0 ? -5 : 4}L13 0L2 6V${h - 7}L23 ${h + 4}z`} fill={active === i ? "#f0f0f0" : "#fff"} />
            <path d={`${top}V${h - 7}L23 ${h + 4}`} fill="none" stroke="#555" />
          </svg>
          <span>{name.split("").join("\n")}</span>
        </SideTab>
      );
    })}
    <SideArrows>
      <button aria-label="上翻"><svg width="8" height="8"><path d="M4 0l4 4H5v4H3V4H0z" fill="#888" /></svg></button>
      <button aria-label="下翻"><svg width="8" height="8"><path d="M4 8l4-4H5V0H3v4H0z" fill="#000" /></svg></button>
    </SideArrows>
  </SideTabs>
);

const PartPanel = () => (
  <TreePanel>
    <PanelHead>
      分部分项
      <Spacer />
      <WindowButton aria-label="关闭面板">
        <svg width="12" height="12"><path d="M1 1l10 10M11 1L1 11" stroke="#000" strokeWidth="2" /></svg>
      </WindowButton>
    </PanelHead>
    <TreeBox>
      <TreeScroll>
        <PartTree>
          <li>
            <PartRoot>整个项目</PartRoot>
            <ul>
              {parts.map((p, i) => (
                <PartRow key={p} $selected={i === 6}><span>{p}</span></PartRow>
              ))}
            </ul>
          </li>
        </PartTree>
      </TreeScroll>
      <HScroll thumb={84} />
    </TreeBox>
    <BottomTabs>
      {["收藏夹", "分部树"].map((name, i) => (
        <BottomTab key={name}>
          <svg width="50" height="17"><path d="M.5 0l5 16.500h39L49.500 0" fill={i ? "#f0f0f0" : "#fff"} stroke="#555" /></svg>
          <span>{name}</span>
        </BottomTab>
      ))}
    </BottomTabs>
  </TreePanel>
);

const BillGrid = () => (
  <Frame $h={85} $bg="#f0f0f0">
    <FrameRow>
      <Clip $mr={2}>
        <Grid $row={20} $head={20}>
          <colgroup>
            <col style={{ width: 33 }} /><col style={{ width: 110 }} /><col /><col style={{ width: 81 }} /><col style={{ width: 119 }} />
          </colgroup>
          <thead><tr><th /><th>编码</th><th /><th>综合合价</th><th>单价构成文件</th></tr></thead>
          <tbody>
            {[["69", "88.06"], ["57", "18.31"], ["", ""]].map((r, i) => (
              <tr key={i}>
                <RowTh $on={i === 0} />
                <td><Branch><i /><i />{r[0] && <><b />A13</>}</Branch></td>
                <Cell $align="right">{r[0]}</Cell>
                <Cell $align="right">{r[1]}</Cell>
                <Cell $align="right">装饰工程</Cell>
              </tr>
            ))}
          </tbody>
        </Grid>
      </Clip>
      <ScrollTrack $vertical $thumb={17}>
        <button aria-label="向上"><Chevron dir="up" /></button>
        <span />
        <button aria-label="向下"><Chevron dir="down" /></button>
      </ScrollTrack>
    </FrameRow>
    <HScroll thumb={17} />
  </Frame>
);

const ResourceGrid = () => (
  <Frame $grow>
    <Clip>
      <Grid>
        <colgroup>
          <col style={{ width: 20 }} /><col style={{ width: 107 }} /><col /><col style={{ width: 57 }} /><col style={{ width: 27 }} />
        </colgroup>
        <thead><tr><th /><HotTh>编码</HotTh><Cell as="th" $align="right">%)&nbsp;</Cell><th>是否暂估</th><th>锁定</th></tr></thead>
        <tbody>
          {resources.map(([no, code, rate, estimate], i) => (
            <tr key={no}>
              <RowTh $on={i === 0}>{no}</RowTh>
              <Cell $on={i === 0}>
                <CodeCell $box={i > 8}>
                  {i > 8 && <PlusBox aria-label="展开"><svg width="7" height="7"><path d="M0 3.500h7M3.500 0v7" stroke="#000" /></svg></PlusBox>}
                  {code}
                </CodeCell>
              </Cell>
              <Cell $align="right">{rate}</Cell>
              <Cell $align="center">{estimate && <Square type="checkbox" aria-label={`暂估 ${no}`} />}</Cell>
              <Cell $pad={22}><Square type="checkbox" aria-label={`锁定 ${no}`} /></Cell>
            </tr>
          ))}
        </tbody>
      </Grid>
    </Clip>
    <HScroll thumb={17} />
  </Frame>
);

const Actions = () => {
  const [filter, setFilter] = useState("所有");
  return (
    <SideActions>
      <ActionGrid>
        <Button>插入</Button>
        <Button>添加</Button>
        <Button>删除</Button>
        <Button>查询</Button>
        <Button $wide>补充</Button>
        <Button $wide>材料价格查询</Button>
      </ActionGrid>
      <FilterSet>
        <legend>筛选条件</legend>
        {["人工", "机械", "材料", "设备", "主材", "所有"].map(f => (
          <RadioLabel key={f} $gap={3}>
            <Radio type="radio" name="filter" $size={13} $line="#333" checked={filter === f} onChange={() => setFilter(f)} />
            {f}
          </RadioLabel>
        ))}
      </FilterSet>
    </SideActions>
  );
};

const QueryDialog = () => {
  const [scope, setScope] = useState("全部");
  return (
    <Dialog>
      <DialogTitle>
        <AppIcon />
        查询
        <Spacer />
        <WinControls gap={30} color="#000" dim="#bbb" />
      </DialogTitle>
      <DialogTools>
        <DialogTabs>
          <PressTab $pad={7}>清单指引</PressTab>
          <TabSep $m={4} />
          <PressTab $pad={8}>清单</PressTab>
          <TabSep $m={6} />
          <PressTab $active $pad={6}>定额</PressTab>
          <TabSep $m={6} />
          <PressTab $pad={6}>人材机</PressTab>
          <TabSep $m={5} />
          <PressTab $pad={6}>补充人材机</PressTab>
          <TabSep $m={4} />
        </DialogTabs>
        <DialogButtons>
          <Button>插入(I)</Button>
          <Button>替换(R)</Button>
        </DialogButtons>
      </DialogTools>
      <DialogBody>
        <QueryPane>
          <Combo>
            <select aria-label="定额库" defaultValue="hb">
              <option value="hb">湖北省市政工程消耗量定额及统一基</option>
            </select>
            <Chevron dir="down" weight={1.2} />
          </Combo>
          <PageTabs>
            <PageTab $active>章节查询</PageTab>
            <PageTab>条件查询</PageTab>
          </PageTabs>
          <Page>
            <QuotaTree>
              {quotaTree.map(([guides, label]) => (
                <QuotaRow key={label + guides} $selected={label === "六、路面标线"}>
                  {guides.split("").map((g, i) => (
                    <Guide key={i} $kind={guideKinds[g]}>
                      {g === "o" && <Chevron dir="down" color="#404040" />}
                      {g === "c" && <Chevron dir="right" color="#a6a6a6" />}
                    </Guide>
                  ))}
                  <span>{label}</span>
                </QuotaRow>
              ))}
            </QuotaTree>
            <ScopeBar>
              {["标准", "补充", "全部"].map(s => (
                <RadioLabel key={s} $gap={9}>
                  <Radio type="radio" name="scope" $size={11} $line="#888" checked={scope === s} onChange={() => setScope(s)} />
                  {s}
                </RadioLabel>
              ))}
            </ScopeBar>
          </Page>
        </QueryPane>
        <ResultPane>
          <Grid $w={554}>
            <colgroup>
              <col style={{ width: 23 }} /><col style={{ width: 62 }} /><col style={{ width: 268 }} />
              <col style={{ width: 55 }} /><col style={{ width: 65 }} /><col style={{ width: 81 }} />
            </colgroup>
            <thead><tr><th /><th>编码</th><HotTh>名称</HotTh><th>单位</th><th>含税单价</th><th>不含税单价</th></tr></thead>
            <tbody>
              {quotas.map(([code, name, unit, taxed, net], i) => (
                <tr key={code}>
                  <RowTh $on={i === 0}>{i + 1}</RowTh>
                  <td>{code}</td>
                  <Cell $on={i === 0}>{name}</Cell>
                  <td>{unit}</td>
                  <Cell $align="right">{taxed}</Cell>
                  <Cell $align="right">{net}</Cell>
                </tr>
              ))}
            </tbody>
          </Grid>
        </ResultPane>
      </DialogBody>
    </Dialog>
  );
};

const Ime = () => (
  <ImeBar>
    <ImeLogo>S</ImeLogo>
    <ImeText>中</ImeText>
    <svg viewBox="0 0 16 16">
      <circle cx="4" cy="5" r="2" fill="none" stroke="#1e73cb" strokeWidth="1.200" />
      <path d="M9.500 7h4.500c.5 4-1 6-4 7 1.300-1.200 1.600-2 1.500-3h-2z" fill="#1e73cb" />
    </svg>
    <FaRegSmile />
    <FaMicrophone />
    <FaKeyboard />
    <svg viewBox="0 0 16 16">
      <circle cx="6" cy="4" r="3" fill="#b9c6d9" />
      <path d="M0 14c0-9 11-9 12 0z" fill="#b9c6d9" />
      <path d="M5 9.500h10.500v5H5z" fill="#fff" stroke="#b9c6d9" />
      <path d="M7 11h2v2H7M11 11h2v2h-2" fill="none" stroke="#b9c6d9" />
    </svg>
    <FaTshirt />
    <FaWrench />
  </ImeBar>
);

const taskApps = [
  { id: "任务视图", w: 50, art: <svg width="22" height="16" viewBox="0 0 22 16"><path d="M5.500 1.500h11v13h-11zM3 3.500H1.500v9H3M19 3.500h1.500v9H19" fill="none" stroke="#fff" strokeWidth="1.200" /></svg> },
  {
    id: "花瓣", w: 51, art: (
      <svg width="22" height="22" viewBox="0 0 22 22">
        <g fill="#ececec">
          <rect x="0.500" y="0.500" width="10" height="10" rx="4" />
          <rect x="11.500" y="0.500" width="10" height="10" rx="4" />
          <rect x="0.500" y="11.500" width="10" height="10" rx="4" />
          <rect x="11.500" y="11.500" width="10" height="10" rx="4" />
          <circle cx="11" cy="11" r="5" />
        </g>
        <path d="M11 11C7 6 9 3 13 1M11 11c5-4 8-2 10 2M11 11c4 5 2 8-2 10M11 11c-5 4-8 2-10-2" fill="none" stroke="#010d12" strokeWidth="1.200" />
      </svg>
    ),
  },
  { id: "浏览器", w: 51, art: <FaInternetExplorer size={22} color="#ececec" /> },
  {
    id: "提醒", w: 53, art: (
      <svg width="28" height="24" viewBox="0 0 28 24">
        <path d="M17 14a6 6 0 1 1-3-7M14 18a5 5 0 1 1 0-7c2 3-1 6-4 5M3 17a8.500 8.500 0 0 0 14 3c3-3 3-6 1-9" fill="none" stroke="#ddd" strokeWidth="1.300" />
        <path d="M15 11c2-1 1-9 6-9s4 8 6 9zM19.500 12h3v2h-3z" fill="#f0b213" />
      </svg>
    ),
  },
  {
    id: "Edge", w: 43, art: (
      <svg width="22" height="22" viewBox="0 0 22 22">
        <path d="M1 10C2 3.500 6.500.500 11 .500c6 0 10 4 10 9.500v3H7.500c.5 5 7 6 12 3v4.500C12 24 3 21 3 13.500 3 10 5 7.500 8 6.500 7.500 7.500 7 8.500 7 9.500h8C15 3 6 3.500 1 10z" fill="#0f78d6" />
      </svg>
    ),
  },
  {
    id: "IE", w: 43, art: (
      <svg width="26" height="26" viewBox="0 0 26 26">
        <circle cx="14" cy="14" r="7.500" fill="none" stroke="#4fb4ef" strokeWidth="4.500" strokeDasharray="41 6.100" />
        <path d="M8 14.500h14" stroke="#4fb4ef" strokeWidth="3.500" />
        <path d="M4 24C-2 20 9 6 18 3c5-2 7 0 5 4M4 24c2 1 4 0 6-1.500" fill="none" stroke="#f2cf3b" strokeWidth="2" />
      </svg>
    ),
  },
  { id: "资源管理器", w: 43, running: true, art: <svg width="22" height="20" viewBox="0 0 22 20"><path d="M0 1h8l2 2h12v16H0z" fill="#f7d774" /><path d="M1 3h20v3H1z" fill="#fdecb0" /><path d="M4 19v-8h14v8h-4v-4H8v4z" fill="#3aa7e0" /></svg> },
  { id: "广联达", w: 43, running: true, art: <svg width="24" height="24" viewBox="0 0 24 24"><path d="M20 1c-3 1-5 2-8 2a10 10 0 1 0 10 10c0-3-3-5-8-3 4 1 3 6-2 6-6 0-6-8 0-10 4-1 7-2 8-5z" fill="#2496ee" /></svg> },
  { id: "安全浏览器", w: 43, running: true, art: <svg width="22" height="22" viewBox="0 0 22 22"><circle cx="11" cy="11" r="10.500" fill="#eef8ea" /><circle cx="11" cy="11" r="9" fill="#4fb52d" /><circle cx="11" cy="11" r="4.500" fill="none" stroke="#fff" strokeWidth="2.500" strokeDasharray="24.500 3.800" /><path d="M7 11.500h8M4 18C2 14 10 5 18 4" fill="none" stroke="#fff" strokeWidth="2" /></svg> },
  { id: "加密锁", w: 43, running: true, art: <svg width="24" height="24" viewBox="0 0 24 24"><rect width="24" height="24" rx="4" fill="#0f92f2" /><path d="M16 5c-4-1-4 2-4 5v9M5 12h14M5 12c0 4 4 4 7 2M19 12c0 4-4 5-7 6" fill="none" stroke="#fff" strokeWidth="2" /></svg> },
  { id: "计价软件", w: 43, running: true, active: true, art: <AppIcon size={24} /> },
  { id: "帮助", w: 43, running: true, art: <svg width="20" height="22" viewBox="0 0 20 22"><path d="M1 8h9v13H1z" fill="#e8e8e8" /><path d="M3 11h5M3 14h5M3 17h5" stroke="#555" /><path d="M8 6c0-6 9-6 9-1 0 4-4 3-4 7M13 14v3" fill="none" stroke="#fff200" strokeWidth="3" /></svg> },
];

const SystemTaskbar = () => (
  <Taskbar>
    <StartButton aria-label="开始"><FaWindows size={17} /></StartButton>
    <SearchBox>
      <svg width="22" height="22"><circle cx="11" cy="11" r="9" fill="none" stroke="#fff" strokeWidth="2.500" /></svg>
      <input placeholder="在这里输入你要搜索的内容" aria-label="搜索" />
      <svg width="14" height="18" viewBox="0 0 14 18"><path d="M4.500 4a2.500 2.500 0 0 1 5 0v5a2.500 2.500 0 0 1-5 0zM2 8v2a5 5 0 0 0 10 0V8M7 15v3" fill="none" stroke="#aaa" /></svg>
    </SearchBox>
    {taskApps.map(app => (
      <TaskButton key={app.id} aria-label={app.id} $w={app.w} $running={app.running} $active={app.active}>{app.art}</TaskButton>
    ))}
    <Tray>
      <TrayItem $w={34} $color="#c8c8c8">链接</TrayItem>
      <TrayItem $w={74} $line={17}><span>52%<br />CPU使用</span></TrayItem>
      <TrayItem $w={24}><Chevron dir="up" color="#fff" weight={1} size={12} /></TrayItem>
      <TrayItem $w={24}><svg width="16" height="12"><path d="M4.500 3.500h10v6h-10z" fill="none" stroke="#fff" /><path d="M7 5h6v3H7zM15 5h1v3h-1zM0 3h5v3H3v3H2V6H0zM1 1h1v2H1zM3 1h1v2H3z" fill="#fff" /></svg></TrayItem>
      <TrayItem $w={26}><svg width="14" height="14"><path d="M1 13C1 6 6 1 13 1M4 13c0-5 4-9 9-9M7 13c0-3 3-6 6-6" fill="none" stroke="#c8c8c8" /><circle cx="11.500" cy="11.500" r="1.800" fill="#fff" /></svg></TrayItem>
      <TrayItem $w={20}><svg width="16" height="14"><path d="M1 5h2l3-3v10L3 9H1z" fill="none" stroke="#fff" /><path d="M8.500 5q1.500 2 0 4M10.500 3q3 4 0 8" fill="none" stroke="#fff" /><path d="M12.500 1q4 6 0 12" fill="none" stroke="#777" /></svg></TrayItem>
      <TrayItem $w={34}><svg width="23" height="13"><path d="M.5.500h22v12H.5z" fill="none" stroke="#fff" /><path d="M3 3.500h17M3 6.500h17" stroke="#fff" strokeDasharray="2 1" /><path d="M5 9.500h13" stroke="#fff" /></svg></TrayItem>
      <TrayItem $w={24}><ImeText $size={13}>中</ImeText></TrayItem>
      <TrayItem $w={32}><TrayLogo>S</TrayLogo></TrayItem>
      <TrayItem $w={64} $line={18}><span>10:20<br />2018/4/17</span></TrayItem>
      <Notice aria-label="通知"><svg width="17" height="17"><path d="M.5 1.500h16v11h-6l-2 2.500v-2.500h-8z" fill="none" stroke="#fff" /></svg></Notice>
    </Tray>
  </Taskbar>
);

const App = () => {
  const [tab, setTab] = useState(1);

  return (
    <Desktop>
      <GlobalStyle />
      <TitleBar>
        <AppIcon />
        <Title>
          广联达计价软件 GBQ4.0 - [招标管理 - 单位工程:恒安孝感公司2#仓库改造工程&gt;恒安孝感公司2#仓库改造工程&gt;恒安孝感公司2#仓库改造工程-土建部分 - C:\Users\Administrator.PC-20141127NRHX\Desktop\恒安孝感公...
        </Title>
        <WinControls gap={30} color="#8a8a8a" />
      </TitleBar>
      <MenuBar>
        <MenuItem><AppIcon />文件(F)</MenuItem>
        {menus.map(m => <MenuItem key={m}>{m}</MenuItem>)}
        <MenuItem><Icon name="help" size={15} />帮助(H)</MenuItem>
        <MenuItem><Icon name="pay" />计量支付</MenuItem>
        <Spacer />
        <WindowButtons $gap={4} $color="#000">
          <WindowButton aria-label="最小化文档"><svg width="10" height="10"><path d="M2 8h6" stroke="#000" strokeWidth="2" /></svg></WindowButton>
          <WindowButton aria-label="还原文档"><svg width="10" height="10"><path d="M.5 5h6v4.500h-6zM3 4V1.500h6.500V7H7" fill="none" stroke="#000" /><path d="M0 4.500h7M3 1h7" stroke="#000" strokeWidth="2" /></svg></WindowButton>
          <WindowButton aria-label="关闭文档"><svg width="10" height="10"><path d="M1 1l8 8M9 1L1 9" stroke="#000" strokeWidth="1.800" /></svg></WindowButton>
        </WindowButtons>
      </MenuBar>
      <MainTools />
      <Workspace>
        <VerticalTabs active={tab} onSelect={setTab} />
        <PartPanel />
        <Splitter><span /></Splitter>
        <Content>
          <SubTools>
            <ToolGroup $grow>
              <Grip />
              <ToolButton>插入</ToolButton>
              <ToolButton $w={16} aria-label="插入列表"><Caret /></ToolButton>
              <ToolButton>添加</ToolButton>
              <ToolButton $w={16} aria-label="添加列表"><Caret /></ToolButton>
              <HiddenTool />
              <ToolButton $muted>取图形工程量</ToolButton>
            </ToolGroup>
          </SubTools>
          <BillGrid />
          <InfoTabs>
            <PressTab $active $pad={5}>工料机显示</PressTab>
            <TabSep $m={4} />
            <PressTab $pad={6}>查看</PressTab>
          </InfoTabs>
          <LowerRow>
            <ResourceGrid />
            <Actions />
          </LowerRow>
        </Content>
      </Workspace>
      <StatusBar>
        <span>清单库：工程量清单项目计量规范(2013-湖北)</span>
        <span>定额库：湖北省房屋建筑与装饰工程消耗量定额及基价表(2013)</span>
        <span>定额专业：建筑工程</span>
        <span>当前分部：墙、柱面装饰与隔断、幕墙工程</span>
        <span>计税模式：增值税(一般计税方法)</span>
      </StatusBar>
      <SystemTaskbar />
      <QueryDialog />
      <RedMark $x={272} $y={126} $w={259} $h={46} />
      <RedMark $x={326} $y={361} $w={125} $h={27} />
      <Ime />
      <SpeedBall>66</SpeedBall>
    </Desktop>
  );
};

export default App;
